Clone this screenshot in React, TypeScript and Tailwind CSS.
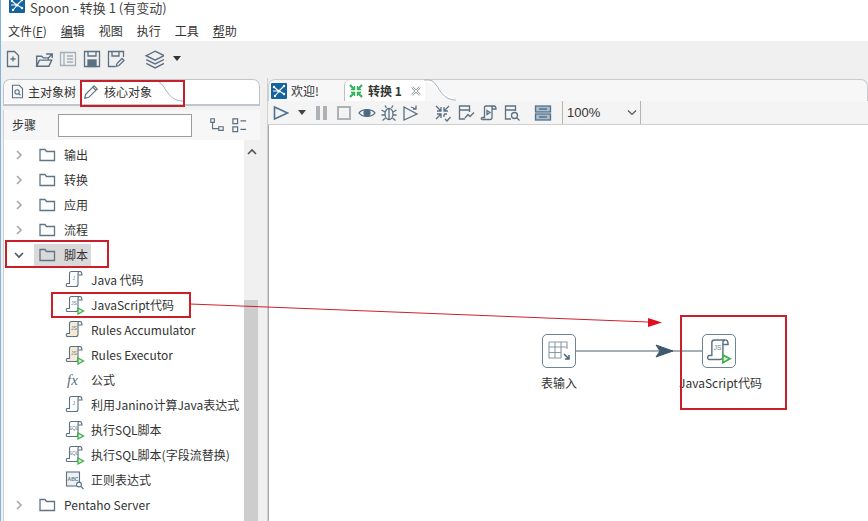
import type { ReactNode } from "react";

const slate = "#5b7083";

function Svg({ size = 18, children, className = "" }: { size?: number; children: ReactNode; className?: string }) {
  return (
    <svg width={size} height={size} viewBox="0 0 18 18" fill="none" stroke={slate} strokeWidth="1.3" className={"shrink-0 " + className}>
      {children}
    </svg>
  );
}

function SpoonLogo({ size = 16 }: { size?: number }) {
  return (
    <svg width={size} height={size} viewBox="0 0 16 16" className="shrink-0">
      <rect width="16" height="16" rx="1" fill="#14639f" />
      <g stroke="#fff" strokeWidth="1.1">
        <path d="M3 4 7 7.5 M13 3 9 7 M4 13 7.5 9 M13 11 9 8.5 M2 8H7" />
      </g>
      <circle cx="8" cy="8" r="1.6" fill="#fff" />
      <circle cx="3" cy="4" r="1.2" fill="#fff" />
      <circle cx="13" cy="3" r="1.2" fill="#fff" />
      <circle cx="4" cy="13" r="1.2" fill="#fff" />
      <circle cx="13" cy="11" r="1.2" fill="#fff" />
    </svg>
  );
}

function Folder() {
  return (
    <svg width="17" height="14" viewBox="0 0 17 14" fill="none" stroke="#5f7484" strokeWidth="1.3" className="shrink-0">
      <path d="M1 12.5V1.5H6L7.5 3.5H15.5V12.5Z" />
    </svg>
  );
}

function Chevron({ open }: { open?: boolean }) {
  return (
    <svg width="10" height="10" viewBox="0 0 10 10" fill="none" stroke={open ? "#4a5560" : "#a3a8ad"} strokeWidth="1.6" className="shrink-0">
      <path d={open ? "M1 3 5 7 9 3" : "M3 1 7 5 3 9"} />
    </svg>
  );
}

function Scroll({ label, run, tint, size = 20 }: { label?: string; run?: boolean; tint?: string; size?: number }) {
  return (
    <svg width={size} height={size} viewBox="0 0 20 20" fill="none" stroke={slate} strokeWidth="1.1" className="shrink-0">
      <path d="M2 16.5H11C12.5 16.5 13 15.5 13 14.5V3.5C13 2.5 13.5 1.5 15 1.5H6.5C5 1.5 4.5 2.5 4.5 3.5V13.5H2C1 14 1 16 2 16.5Z" fill={tint ?? "none"} />
      <path d="M15 1.5C16.5 1.5 17 3 17 5H13.2" />
      {label && (
        <text x="8.8" y="9.5" fontSize="5" fill="#6b7c8a" stroke="none" textAnchor="middle" fontFamily="Liberation Sans, sans-serif">
          {label}
        </text>
      )}
      {run && <path d="M13 13 18.5 16 13 19Z" stroke="#3fae49" strokeWidth="1.3" fill="#d8f2da" />}
    </svg>
  );
}

function Regex() {
  return (
    <svg width="20" height="20" viewBox="0 0 20 20" fill="none" stroke={slate} strokeWidth="1.1" className="shrink-0">
      <rect x="1.5" y="2" width="13" height="14" fill="#eef1f3" />
      <text x="8" y="11" fontSize="5" fontWeight="700" fill="#68798a" stroke="none" textAnchor="middle" fontFamily="Liberation Sans, sans-serif">
        ABC
      </text>
      <circle cx="14" cy="14.5" r="2.4" fill="#fff" />
      <path d="M16 16.5 18.5 19" />
    </svg>
  );
}

function TreeFolder({ label, open, selected }: { label: string; open?: boolean; selected?: boolean }) {
  return (
    <div className="flex h-[25px] items-center">
      <div className="flex w-[30px] justify-center">
        <Chevron open={open} />
      </div>
      <div className={"flex h-[22px] items-center pl-[5px] pr-[3px] " + (selected ? "bg-[#d9d9d9]" : "")}>
        <div className="flex w-[25px]">
          <Folder />
        </div>
        <span>{label}</span>
      </div>
    </div>
  );
}

function TreeItem({ icon, label }: { icon: ReactNode; label: string }) {
  return (
    <div className="flex h-[25px] items-center pl-[61px]">
      <div className="flex w-[26px]">{icon}</div>
      <span className="whitespace-nowrap">{label}</span>
    </div>
  );
}

function RedBox({ className }: { className: string }) {
  return <div className={"pointer-events-none absolute border-2 border-[#c8202a] " + className} />;
}

function TabCurve({ className = "", stroke = "#a9b4bd" }: { className?: string; stroke?: string }) {
  return (
    <svg width="32" height="22" viewBox="0 0 32 22" fill="none" className={"shrink-0 " + className}>
      <path d="M0 1H5C14 1 15 20 30 21H32" stroke={stroke} strokeWidth="1" fill="#fff" />
    </svg>
  );
}

function MainToolbar() {
  return (
    <div className="flex h-[37px] items-center bg-[#f0f0f0] pb-[2px] pl-[4px]">
      <Svg>
        <path d="M3.5 1.5H10.5L14.5 5.5V16.5H3.5Z M6.5 9H11.5 M9 6.5V11.5" />
      </Svg>
      <Svg className="ml-[13px]" size={20}>
        <path d="M1.5 15.5V6.5H6L7.5 8H12V10 M1.5 15.5 4 10H15L12.5 15.5Z M10 4.5H15.5V8 M15.5 4.5 12 8" />
      </Svg>
      <div className="ml-[4px] opacity-50">
        <Svg>
          <path d="M1.5 2.5H16.5V15.5H1.5Z M5 2.5V15.5 M8 6H14 M8 9H14 M8 12H14" />
        </Svg>
      </div>
      <Svg className="ml-[6px]">
        <path d="M1.5 1.5H16.5V16.5H1.5Z" />
        <path d="M5 1.5V6H13V1.5" />
        <rect x="5" y="10" width="8" height="6.5" fill={slate} />
      </Svg>
      <Svg className="ml-[6px]">
        <path d="M8 16.5H1.5V1.5H16.5V7 M5 1.5V6H12V1.5" />
        <path d="M9 16.5 10 13.5 15 8.5 17 10.5 12 15.5Z" />
      </Svg>
      <Svg className="ml-[19px]" size={20}>
        <path d="M10 2 18 6 10 10 2 6Z M2 9.5 10 13.5 18 9.5 M2 13 10 17 18 13" />
      </Svg>
      <div className="ml-[9px] h-0 w-0 border-x-[4px] border-t-[5px] border-x-transparent border-t-[#333]" />
    </div>
  );
}

function LeftPanel() {
  return (
    <div className="flex h-full w-[257px] shrink-0 flex-col pt-[1px]">
      <div className="flex h-[27px] shrink-0 items-start rounded-t-[7px] border border-b-2 border-[#bfc5ca] bg-white">
        <div className="flex h-[23px] w-[76px] shrink-0 items-center rounded-tl-[7px] bg-[#f8f8f8] pl-[6px]">
          <Svg size={15}>
            <path d="M3 1.5H11L15 5.5V16.5H3Z" />
            <circle cx="8.5" cy="9.5" r="2.6" />
            <path d="M10.5 11.5 12.5 13.5" />
          </Svg>
          <span className="ml-[3px] whitespace-nowrap">主对象树</span>
        </div>
        <div className="flex h-[23px] items-center bg-white pl-[3px]">
          <Svg size={16}>
            <path d="M2 16 3 11.5 12.5 2 16 5.5 6.5 15Z M11 3.5 14.5 7" />
          </Svg>
          <span className="ml-[5px] whitespace-nowrap">核心对象</span>
        </div>
        <TabCurve className="-ml-[1px]" />
      </div>
      <div className="h-[4px] shrink-0 bg-[#f0f0f0]" />
      <div className="flex min-h-0 flex-1 flex-col border-l border-[#d0d0d0] bg-white">
        <div className="flex h-[30px] shrink-0 items-center bg-[#f7f7f7] pl-[8px]">
          <span className="w-[46px]">步骤</span>
          <div className="h-[23px] w-[134px] border border-[#9d9d9d] bg-white" />
          <Svg size={16} className="ml-[17px]">
            <path d="M2 2H6V6H2Z M11 11H16V15H11Z M4 6V13H11" />
          </Svg>
          <Svg size={17} className="ml-[6px]">
            <path d="M2 2H7V7H2Z M2 10.5H7V15.5H2Z M10 4H16 M10 13H16" />
          </Svg>
        </div>
        <div className="flex min-h-0 flex-1">
          <div className="min-w-0 flex-1 overflow-hidden pt-[2px] text-[#333]">
            <TreeFolder label="输出" />
            <TreeFolder label="转换" />
            <TreeFolder label="应用" />
            <TreeFolder label="流程" />
            <TreeFolder label="脚本" open selected />
            <TreeItem icon={<Scroll label="J" />} label="Java 代码" />
            <TreeItem icon={<Scroll label="JS" run />} label="JavaScript代码" />
            <TreeItem icon={<Scroll label="JS" tint="#f4ead6" />} label="Rules Accumulator" />
            <TreeItem icon={<Scroll label="JS" run tint="#f4ead6" />} label="Rules Executor" />
            <TreeItem icon={<span className="pl-[2px] font-['Liberation_Serif',serif] text-[15px] italic leading-[18px] text-[#5b7083]">fx</span>} label="公式" />
            <TreeItem icon={<Scroll label="J" />} label="利用Janino计算Java表达式" />
            <TreeItem icon={<Scroll label="SQL" run />} label="执行SQL脚本" />
            <TreeItem icon={<Scroll label="SQL" run />} label="执行SQL脚本(字段流替换)" />
            <TreeItem icon={<Regex />} label="正则表达式" />
            <TreeFolder label="Pentaho Server" />
          </div>
          <div className="flex w-[16px] shrink-0 flex-col bg-[#f0f0f0]">
            <div className="flex h-[22px] items-center justify-center">
              <svg width="10" height="7" viewBox="0 0 10 7" fill="none" stroke="#555" strokeWidth="1.6">
                <path d="M1 6 5 2 9 6" />
              </svg>
            </div>
            <div className="mt-[138px] w-[14px] flex-1 bg-[#cdcdcd]" />
          </div>
        </div>
      </div>
    </div>
  );
}

function CanvasToolbar() {
  return (
    <div className="flex h-[24px] shrink-0 items-center border-b border-[#cfcfcf] bg-[#f4f4f4] pl-[5px]">
      <svg width="16" height="16" viewBox="0 0 16 16" fill="none" stroke="#4d7396" strokeWidth="1.6" className="shrink-0">
        <path d="M1.5 2 14.5 8 1.5 14Z" />
      </svg>
      <div className="ml-[9px] h-0 w-0 border-x-[4px] border-t-[5px] border-x-transparent border-t-[#444]" />
      <div className="ml-[10px] flex gap-[3px]">
        <div className="h-[14px] w-[4px] bg-[#adb2b6]" />
        <div className="h-[14px] w-[4px] bg-[#adb2b6]" />
      </div>
      <div className="ml-[10px] h-[14px] w-[14px] border-2 border-[#adb2b6]" />
      <svg width="18" height="18" viewBox="0 0 18 18" className="ml-[7px] shrink-0" fill="none" stroke="#4d6a82" strokeWidth="1.3">
        <path d="M1 9C4 4.5 14 4.5 17 9 14 13.5 4 13.5 1 9Z" />
        <circle cx="9" cy="9" r="3" fill="#4d6a82" />
      </svg>
      <Svg className="ml-[4px]">
        <ellipse cx="9" cy="10" rx="4" ry="5.5" />
        <path d="M9 4.5V15.5 M5 8 1.5 6 M13 8 16.5 6 M5 11H1.5 M13 11H16.5 M5.5 14 2.5 16.5 M12.5 14 15.5 16.5 M6.5 4 5 1.5 M11.5 4 13 1.5" />
      </Svg>
      <Svg className="ml-[4px]">
        <path d="M2 3 15 10 2 16Z M9 3 14 5 M14 1.5V5H11" />
      </Svg>
      <Svg className="ml-[14px]">
        <path d="M2 2 7 7 M7 3V7H3 M15 2 10 7 M10 3V7H14 M2 15 7 10 M3 10H7V14 M10 10V13 M10 10H13" />
        <path d="M11 15 13 17 16.5 13" />
      </Svg>
      <Svg className="ml-[5px]">
        <path d="M8 15H2.5V2H12.5V8 M2.5 6H12.5" />
        <path d="M8 14 11 10.5 13 12.5 17 8.5" />
      </Svg>
      <Svg className="ml-[5px]">
        <path d="M2 15.5H10C11.5 15.5 12 14.5 12 13.5V3.5C12 2.5 12.5 2 14 2H6C4.5 2 4.5 3 4.5 3.5V13.5H2C1 14 1 15 2 15.5Z M14 2C15.5 2 16 3 16 5H12" />
        <path d="M7 6.5 10 8.5 7 10.5Z" />
      </Svg>
      <Svg className="ml-[5px]">
        <path d="M8 15H2.5V2H12.5V7 M2.5 6H12.5" />
        <circle cx="11.5" cy="11.5" r="3" />
        <path d="M14 14 16.5 16.5" />
      </Svg>
      <svg width="18" height="18" viewBox="0 0 18 18" className="ml-[13px] shrink-0" fill="#a9bdcc" stroke="#54718a" strokeWidth="1.3">
        <rect x="1.5" y="2" width="15" height="6" />
        <rect x="1.5" y="10" width="15" height="6" />
        <path d="M5 5H13 M5 13H13" />
      </svg>
      <div className="ml-[10px] flex h-full w-[79px] items-center border-x border-[#b5b5b5] pl-[4px] pr-[3px]">
        <span className="flex-1 font-['Liberation_Sans',sans-serif] text-[13px]">100%</span>
        <svg width="10" height="7" viewBox="0 0 10 7" fill="none" stroke="#555" strokeWidth="1.2">
          <path d="M1 1.5 5 5.5 9 1.5" />
        </svg>
      </div>
    </div>
  );
}

function RightPanel() {
  return (
    <div className="flex h-full min-w-0 flex-1 flex-col pt-[1px]">
      <div className="flex h-[22px] shrink-0 items-end rounded-t-[7px] border border-b-0 border-[#c9cdd0] bg-[#f7f7f7]">
        <div className="flex h-full w-[75px] items-center pl-[2px]">
          <SpoonLogo />
          <span className="ml-[4px] whitespace-nowrap">欢迎!</span>
        </div>
        <div className="flex h-full items-center rounded-tl-[6px] border-l border-[#b9c0c6] bg-white pl-[3px]">
          <svg width="16" height="16" viewBox="0 0 16 16" fill="none" stroke="#2fb45a" strokeWidth="2.2" className="shrink-0">
            <path d="M2 2 6.5 6.5 M2 14 6.5 9.5 M14 2 9.5 6.5 M14 14 9.5 9.5" />
            <path d="M6.5 3V6.5H3 M9.5 3V6.5H13 M6.5 13V9.5H3 M9.5 13V9.5H13" strokeWidth="1.3" />
          </svg>
          <span className="ml-[4px] whitespace-nowrap font-bold">转换 1</span>
          <span className="ml-[8px] text-[13px] leading-none text-[#9aa0a5]">
            <svg width="12" height="12" viewBox="0 0 12 12" fill="none" stroke="#9aa0a5" strokeWidth="2.4">
              <path d="M2 2 10 10 M10 2 2 10" />
              <path d="M2 2 10 10 M10 2 2 10" stroke="#fff" strokeWidth="1" />
            </svg>
          </span>
          <span className="w-[3px]" />
        </div>
        <TabCurve className="-ml-[1px]" />
      </div>
      <CanvasToolbar />
      <div className="relative min-h-0 flex-1 border-l border-[#a8adb1] bg-white">
        <Canvas />
      </div>
    </div>
  );
}

function Canvas() {
  return (
    <>
      <div className="absolute left-[273px] top-[209px] flex h-[34px] w-[34px] items-center justify-center rounded-[5px] border border-[#6f8494] bg-white">
        <svg width="26" height="26" viewBox="0 0 26 26" fill="none" stroke="#8a9aa6" strokeWidth="1.1">
          <path d="M3 4H21V11 M3 4V20H15 M3 9H21 M3 14.5H15 M9 4V20 M15 4V20" />
          <path d="M18 16 23 21 M23 17V21H19" stroke="#4d6478" strokeWidth="1.5" />
        </svg>
      </div>
      <div className="absolute left-[272px] top-[249px] whitespace-nowrap text-[#333]">表输入</div>
      <svg className="pointer-events-none absolute left-[0px] top-[0px]" width="600" height="396" viewBox="0 0 600 396" fill="none">
        <path d="M307 226H433" stroke="#4a6177" strokeWidth="1.2" />
        <path d="M387 220 404 226 387 232 391 226Z" fill="#3f5870" stroke="#3f5870" />
      </svg>
      <div className="absolute left-[433px] top-[209px] flex h-[34px] w-[34px] items-center justify-center rounded-[5px] border border-[#6f8494] bg-white">
        <Scroll label="JS" run size={26} />
      </div>
      <div className="absolute left-[410px] top-[249px] whitespace-nowrap text-[#333]">JavaScript代码</div>
    </>
  );
}

export default function App() {
  return (
    <div className="relative h-[521px] w-[868px] overflow-hidden bg-white font-['Noto_Sans_CJK_SC','Liberation_Sans',sans-serif] text-[12px] text-[#333]">
      <div className="flex h-[21px] items-start pl-[9px]">
        <div className="-mt-[3px]">
          <SpoonLogo />
        </div>
        <span className="ml-[5px] text-[13px] leading-[16px] text-[#444]">Spoon - 转换 1 (有变动)</span>
      </div>
      <div className="flex h-[20px] items-center gap-[14px] pl-[8px]">
        <span>
          文件(<u>F</u>)
        </span>
        <span>
          <u>编</u>辑
        </span>
        <span>视图</span>
        <span>执行</span>
        <span>工具</span>
        <span>
          <u>帮</u>助
        </span>
      </div>
      <MainToolbar />
      <div className="flex h-[443px] bg-[#f0f0f0] pl-[3px]">
        <LeftPanel />
        <div className="w-[8px] shrink-0 border-r border-[#d0d0d0]" />
        <RightPanel />
      </div>
      <div className="absolute left-0 top-0 h-full w-[1px] bg-[#7fb4dc]" />
      <RedBox className="left-[80px] top-[80px] h-[27px] w-[105px]" />
      <RedBox className="left-[5px] top-[240px] h-[28px] w-[104px]" />
      <RedBox className="left-[51px] top-[292px] h-[26px] w-[140px]" />
      <RedBox className="left-[680px] top-[315px] h-[95px] w-[107px]" />
      <svg className="pointer-events-none absolute left-0 top-0" width="868" height="521" viewBox="0 0 868 521" fill="none">
        <path d="M190 304 648 322" stroke="#d0202a" strokeWidth="1" />
        <path d="M648 318 662 322.5 648 327Z" fill="#e01020" />
      </svg>
    </div>
  );
}
